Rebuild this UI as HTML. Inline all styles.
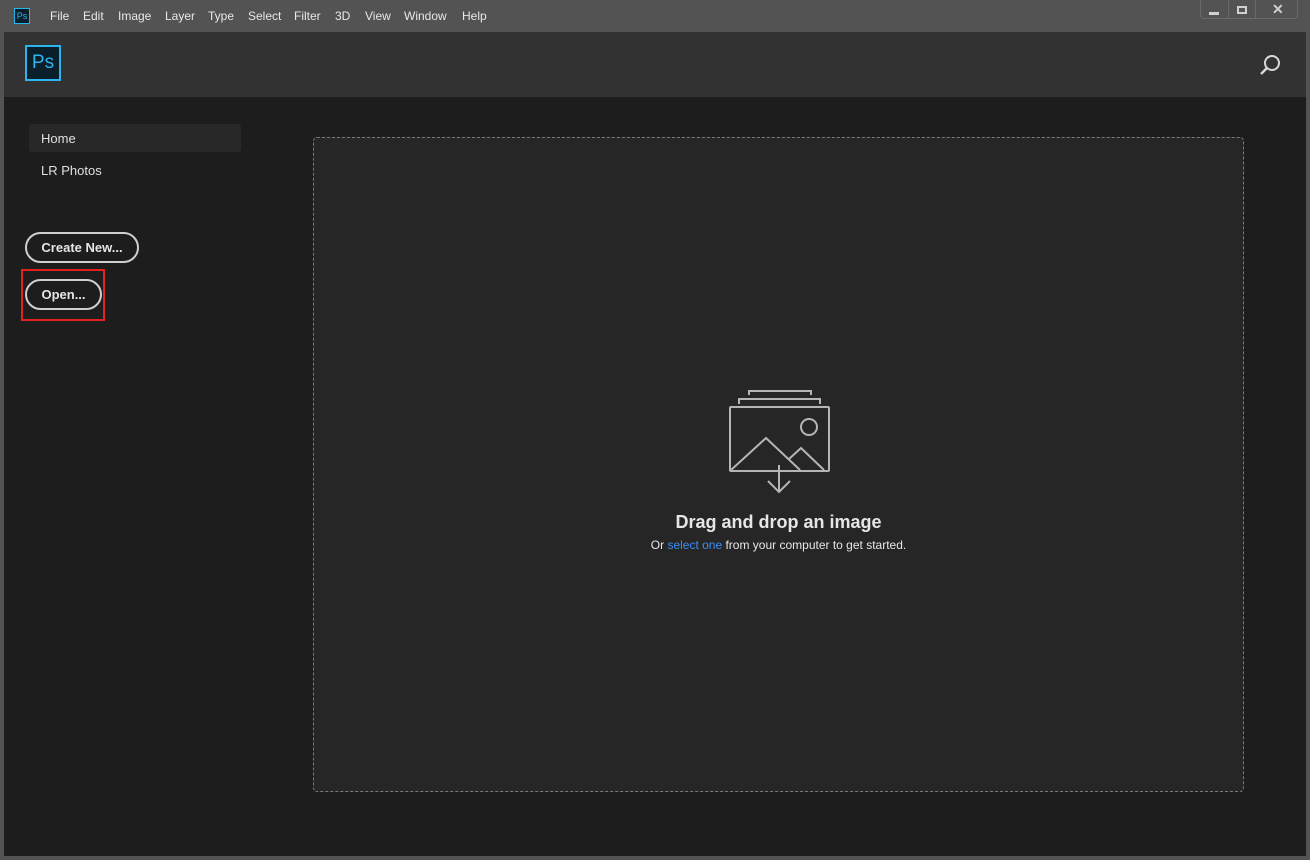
<!DOCTYPE html>
<html><head><style>
*{margin:0;padding:0;box-sizing:border-box}
body{width:1310px;height:860px;background:#535353;font-family:"Liberation Sans",sans-serif;position:relative;overflow:hidden}
.menu{position:absolute;top:0;left:0;right:0;height:32px;background:#535353;color:#e8e8e8;font-size:12px}
.menu span{position:absolute;top:9px}
.hdr{position:absolute;left:4px;right:4px;top:32px;height:65px;background:#323232}
.main{position:absolute;left:4px;right:4px;top:97px;bottom:4px;background:#1d1d1d}
.nav{position:absolute;color:#e0e0e0;font-size:13px}
.btn{position:absolute;border:2px solid #cfcfcf;border-radius:16px;color:#e6e6e6;font-weight:bold;font-size:13px;text-align:center}
.drop{position:absolute;left:313px;top:137px;width:931px;height:655px;border:1px dashed #7a7a7a;border-radius:4px;background:#262626}
</style></head><body>
<div class="menu">
<div style="position:absolute;left:14px;top:8px;width:16px;height:16px;border:1px solid #2bb5ef;background:#0b1f2b;color:#2bb5ef;font-size:9px;text-align:center;line-height:14px">Ps</div>
<span style="left:50px">File</span><span style="left:83px">Edit</span><span style="left:118px">Image</span><span style="left:165px">Layer</span><span style="left:208px">Type</span><span style="left:248px">Select</span><span style="left:294px">Filter</span><span style="left:335px">3D</span><span style="left:365px">View</span><span style="left:404px">Window</span><span style="left:462px">Help</span>
<div style="position:absolute;left:1200px;top:0;width:98px;height:19px;border:1px solid #6a6a6a;border-top:none;border-radius:0 0 4px 4px"></div>
<div style="position:absolute;left:1228px;top:0;width:1px;height:19px;background:#6a6a6a"></div>
<div style="position:absolute;left:1255px;top:0;width:1px;height:19px;background:#6a6a6a"></div>
<div style="position:absolute;left:1209px;top:12px;width:10px;height:3px;background:#d0d0d0"></div>
<div style="position:absolute;left:1237px;top:6px;width:10px;height:8px;border:2px solid #d0d0d0"></div>
<span style="left:1272px;top:1px;font-size:14px;font-weight:bold;color:#d0d0d0">✕</span>
</div>
<div class="hdr">
<div style="position:absolute;left:21px;top:13px;width:36px;height:36px;border:2px solid #2bb5ef;background:#0b1f2b;color:#2bb5ef;font-size:19px;text-align:center;line-height:31px">Ps</div>
<svg style="position:absolute;left:1252px;top:20px" width="26" height="26" viewBox="0 0 26 26"><circle cx="16" cy="11" r="7" fill="none" stroke="#d8d8d8" stroke-width="2"/><path d="M11 16L5 22" stroke="#d8d8d8" stroke-width="2.5"/></svg>
</div>
<div class="main"></div>
<div style="position:absolute;left:29px;top:124px;width:212px;height:28px;background:#282828;border-radius:3px"></div>
<div class="nav" style="left:41px;top:131px">Home</div>
<div class="nav" style="left:41px;top:163px">LR Photos</div>
<div class="btn" style="left:25px;top:232px;width:114px;height:31px;line-height:27px">Create New...</div>
<div class="btn" style="left:25px;top:279px;width:77px;height:31px;line-height:27px">Open...</div>
<div style="position:absolute;left:21px;top:269px;width:84px;height:52px;border:2px solid #e52020"></div>
<div class="drop"></div>
<svg style="position:absolute;left:720px;top:385px" width="120" height="115" viewBox="720 385 120 115" fill="none" stroke="#b5b5b5" stroke-width="2">
<path d="M749 395V391H811V395"/><path d="M739 404V399H820V404"/>
<rect x="730" y="407" width="99" height="64" rx="1"/>
<circle cx="809" cy="427" r="8"/>
<path d="M731 470L766 438L800 470M789 459L801 448L824 470"/>
<path d="M779 465V492M768 481L779 492L790 481"/>
</svg>
<div style="position:absolute;left:313px;width:931px;top:512px;text-align:center;color:#e6e6e6;font-size:18px;font-weight:bold">Drag and drop an image</div>
<div style="position:absolute;left:313px;width:931px;top:538px;text-align:center;color:#e6e6e6;font-size:12px">Or <span style="color:#3d8ff5">select one</span> from your computer to get started.</div>
</body></html>
